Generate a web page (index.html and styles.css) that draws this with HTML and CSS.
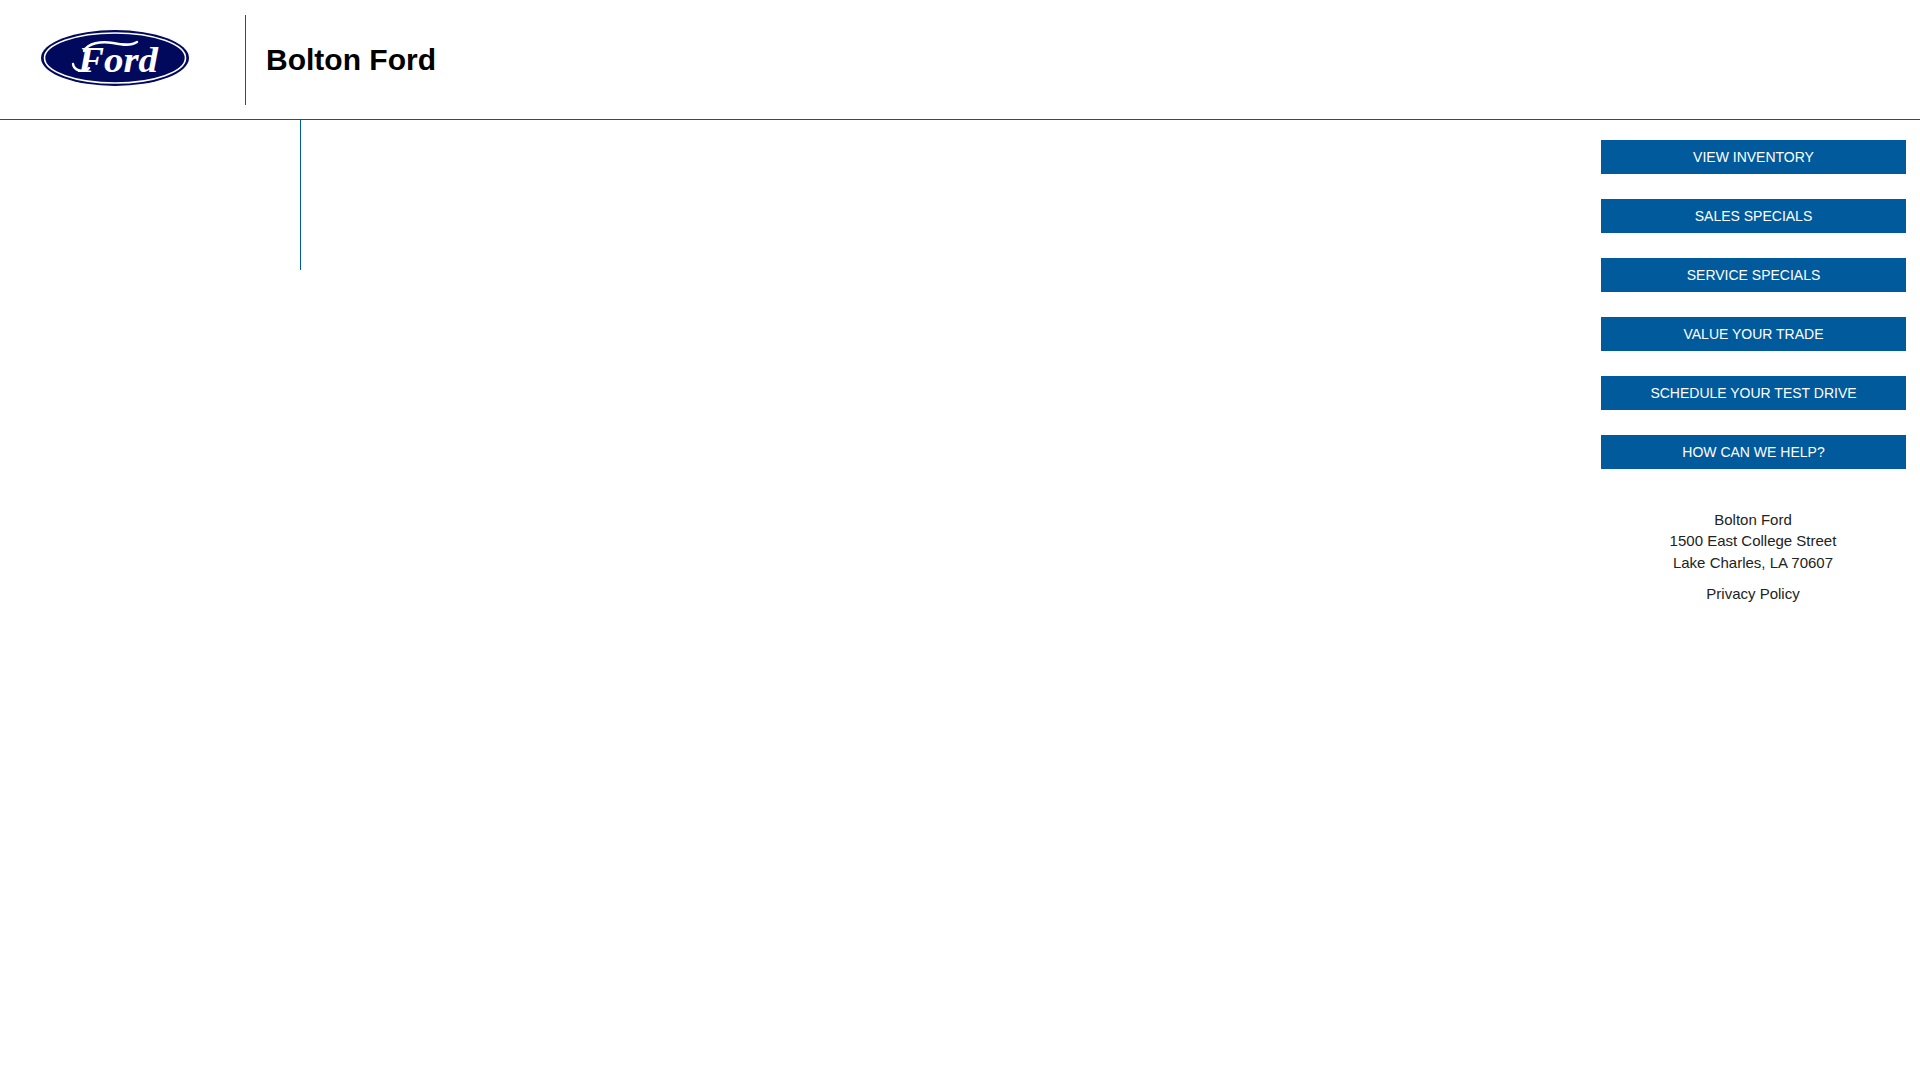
FILE: index.html
```html
<!DOCTYPE html>
<html lang="en">
<head>
    <meta charset="UTF-8">
    <meta name="viewport" content="width=device-width, initial-scale=1.0">
    <title>Bolton Ford</title>
    <link rel="stylesheet" href="styles.css">
</head>
<body>
    <header class="site-header">
        <div class="logo-box">
            <svg class="ford-logo" viewBox="0 0 148 56" width="148" height="56" role="img" aria-label="Ford">
                <ellipse cx="74" cy="28" rx="74" ry="28" fill="#00095b"/>
                <ellipse cx="74" cy="28" rx="70.5" ry="25" fill="none" stroke="#fff" stroke-width="1.6"/>
                <path class="logo-swash" d="M43 21 C47 13 60 11 72 13 C82 15 90 16 96 12"/>
                <path class="logo-swash" d="M32 34 C33 41 43 43 48 38"/>
                <text class="logo-word" x="37" y="42" textLength="80" lengthAdjust="spacingAndGlyphs">Ford</text>
            </svg>
        </div>
        <h1 class="site-title">Bolton Ford</h1>
    </header>

    <main class="page">
        <div class="left-rail"></div>
        <aside class="sidebar">
            <nav class="btn-list">
                <a class="btn" href="#">VIEW INVENTORY</a>
                <a class="btn" href="#">SALES SPECIALS</a>
                <a class="btn" href="#">SERVICE SPECIALS</a>
                <a class="btn" href="#">VALUE YOUR TRADE</a>
                <a class="btn" href="#">SCHEDULE YOUR TEST DRIVE</a>
                <a class="btn" href="#">HOW CAN WE HELP?</a>
            </nav>
            <address class="dealer-info">
                Bolton Ford<br>
                1500 East College Street<br>
                Lake Charles, LA 70607
            </address>
            <a class="privacy-link" href="#">Privacy Policy</a>
        </aside>
    </main>
</body>
</html>
```

FILE: styles.css
```css
body {
    font-family: "Liberation Sans", Arial, sans-serif;
    margin: 0;
    padding: 0;
    background-color: #fff;
    color: #222;
}
a {
    text-decoration: none;
    color: inherit;
}
.site-header {
    display: flex;
    align-items: center;
    height: 119px;
    border-bottom: 1px solid #005a9c;
}
.logo-box {
    display: flex;
    align-items: center;
    box-sizing: border-box;
    width: 246px;
    height: 90px;
    padding-left: 41px;
    padding-bottom: 4px;
    border-right: 1px solid #005a9c;
}
.ford-logo {
    display: block;
}
.logo-word {
    font-family: "Liberation Serif", serif;
    font-style: italic;
    font-weight: bold;
    font-size: 36px;
    fill: #fff;
}
.logo-swash {
    fill: none;
    stroke: #fff;
    stroke-width: 2.4;
    stroke-linecap: round;
}
.site-title {
    margin: 0 0 0 20px;
    font-size: 30px;
    font-weight: bold;
    color: #000;
}
.page {
    display: flex;
    justify-content: space-between;
    align-items: flex-start;
}
.left-rail {
    width: 301px;
    height: 150px;
    box-sizing: border-box;
    border-right: 1px solid #005a9c;
}
.sidebar {
    width: 305px;
    margin-right: 14px;
    padding-top: 20px;
    text-align: center;
}
.btn-list {
    display: flex;
    flex-direction: column;
    gap: 25px;
}
.btn {
    display: block;
    height: 34px;
    line-height: 34px;
    background-color: #005a9c;
    color: #fff;
    font-size: 14px;
}
.dealer-info {
    margin-top: 40px;
    padding-right: 1px;
    font-style: normal;
    font-size: 15px;
    line-height: 1.42857;
}
.privacy-link {
    display: block;
    margin-top: 10px;
    padding-right: 1px;
    font-size: 15px;
    line-height: 1.42857;
}
```
